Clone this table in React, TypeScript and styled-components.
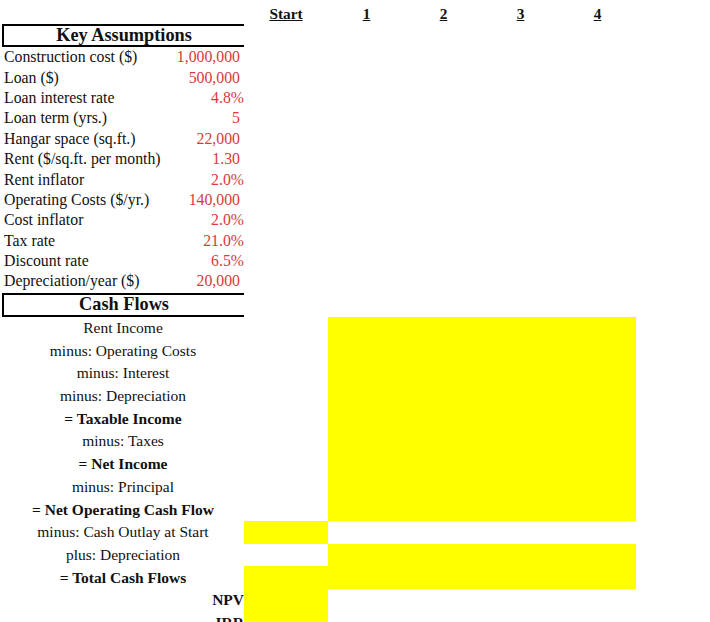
import styled, { createGlobalStyle } from "styled-components";

const GlobalStyle = createGlobalStyle`
  body {
    margin: 0;
    background: #ffffff;
    font-family: "Liberation Serif", "Times New Roman", serif;
    color: #111111;
  }
`;

const COLUMNS = "242px 84px repeat(4, 77px)";

const Sheet = styled.div`
  padding-left: 2px;
  width: 710px;
  height: 622px;
  overflow: hidden;
`;

const HeaderRow = styled.div`
  display: grid;
  grid-template-columns: ${COLUMNS};
  height: 24px;
  align-items: center;
`;

const HeaderCell = styled.div`
  text-align: center;
  font-size: 15.3px;
  font-weight: bold;
  text-decoration: underline;
  padding-top: 3px;
`;

const SectionTitle = styled.div<{ $top: number; $h: number }>`
  box-sizing: border-box;
  width: 242px;
  height: ${(p) => p.$h}px;
  margin-top: ${(p) => p.$top}px;
  border-top: 2px solid #000;
  border-bottom: 2px solid #000;
  border-left: 2px solid #000;
  display: flex;
  align-items: center;
  justify-content: center;
  font-size: 18.3px;
  font-weight: bold;
`;

const AssumptionRow = styled.div`
  display: flex;
  justify-content: space-between;
  align-items: center;
  width: 242px;
  height: 20.4px;
  font-size: 15.8px;
  padding-left: 2px;
  box-sizing: border-box;
`;

const AssumptionValue = styled.span<{ $pct: boolean }>`
  color: #d8393b;
  padding-right: ${(p) => (p.$pct ? 0 : 4)}px;
`;

const FlowRow = styled.div`
  display: grid;
  grid-template-columns: ${COLUMNS};
  height: 22.7px;
`;

const FlowLabel = styled.div<{ $bold: boolean; $right: boolean }>`
  display: flex;
  align-items: center;
  justify-content: ${(p) => (p.$right ? "flex-end" : "center")};
  font-size: 15.5px;
  font-weight: ${(p) => (p.$bold ? "bold" : "normal")};
`;

const FlowCell = styled.div<{ $fill: boolean }>`
  background: ${(p) => (p.$fill ? "#ffff00" : "transparent")};
`;

type Assumption = { label: string; value: string };

const assumptions: Assumption[] = [
  { label: "Construction cost ($)", value: "1,000,000" },
  { label: "Loan ($)", value: "500,000" },
  { label: "Loan interest rate", value: "4.8%" },
  { label: "Loan term (yrs.)", value: "5" },
  { label: "Hangar space (sq.ft.)", value: "22,000" },
  { label: "Rent ($/sq.ft. per month)", value: "1.30" },
  { label: "Rent inflator", value: "2.0%" },
  { label: "Operating Costs ($/yr.)", value: "140,000" },
  { label: "Cost inflator", value: "2.0%" },
  { label: "Tax rate", value: "21.0%" },
  { label: "Discount rate", value: "6.5%" },
  { label: "Depreciation/year ($)", value: "20,000" },
];

type Flow = {
  label: string;
  bold?: boolean;
  right?: boolean;
  start: boolean;
  years: boolean;
};

const flows: Flow[] = [
  { label: "Rent Income", start: false, years: true },
  { label: "minus: Operating Costs", start: false, years: true },
  { label: "minus: Interest", start: false, years: true },
  { label: "minus: Depreciation", start: false, years: true },
  { label: "= Taxable Income", bold: true, start: false, years: true },
  { label: "minus: Taxes", start: false, years: true },
  { label: "= Net Income", bold: true, start: false, years: true },
  { label: "minus: Principal", start: false, years: true },
  { label: "= Net Operating Cash Flow", bold: true, start: false, years: true },
  { label: "minus: Cash Outlay at Start", start: true, years: false },
  { label: "plus: Depreciation", start: false, years: true },
  { label: "= Total Cash Flows", bold: true, start: true, years: true },
  { label: "NPV", bold: true, right: true, start: true, years: false },
  { label: "IRR", bold: true, right: true, start: true, years: false },
];

const headers = ["Start", "1", "2", "3", "4"];

export default function App() {
  return (
    <>
      <GlobalStyle />
      <Sheet>
        <HeaderRow>
          <div />
          {headers.map((h) => (
            <HeaderCell key={h}>{h}</HeaderCell>
          ))}
        </HeaderRow>

        <SectionTitle $top={0} $h={23}>
          Key Assumptions
        </SectionTitle>
        {assumptions.map((a) => (
          <AssumptionRow key={a.label}>
            <span>{a.label}</span>
            <AssumptionValue $pct={a.value.endsWith("%")}>
              {a.value}
            </AssumptionValue>
          </AssumptionRow>
        ))}

        <SectionTitle $top={1} $h={24}>
          Cash Flows
        </SectionTitle>
        {flows.map((f) => (
          <FlowRow key={f.label}>
            <FlowLabel $bold={!!f.bold} $right={!!f.right}>
              {f.label}
            </FlowLabel>
            <FlowCell $fill={f.start} />
            {[1, 2, 3, 4].map((y) => (
              <FlowCell key={y} $fill={f.years} />
            ))}
          </FlowRow>
        ))}
      </Sheet>
    </>
  );
}
